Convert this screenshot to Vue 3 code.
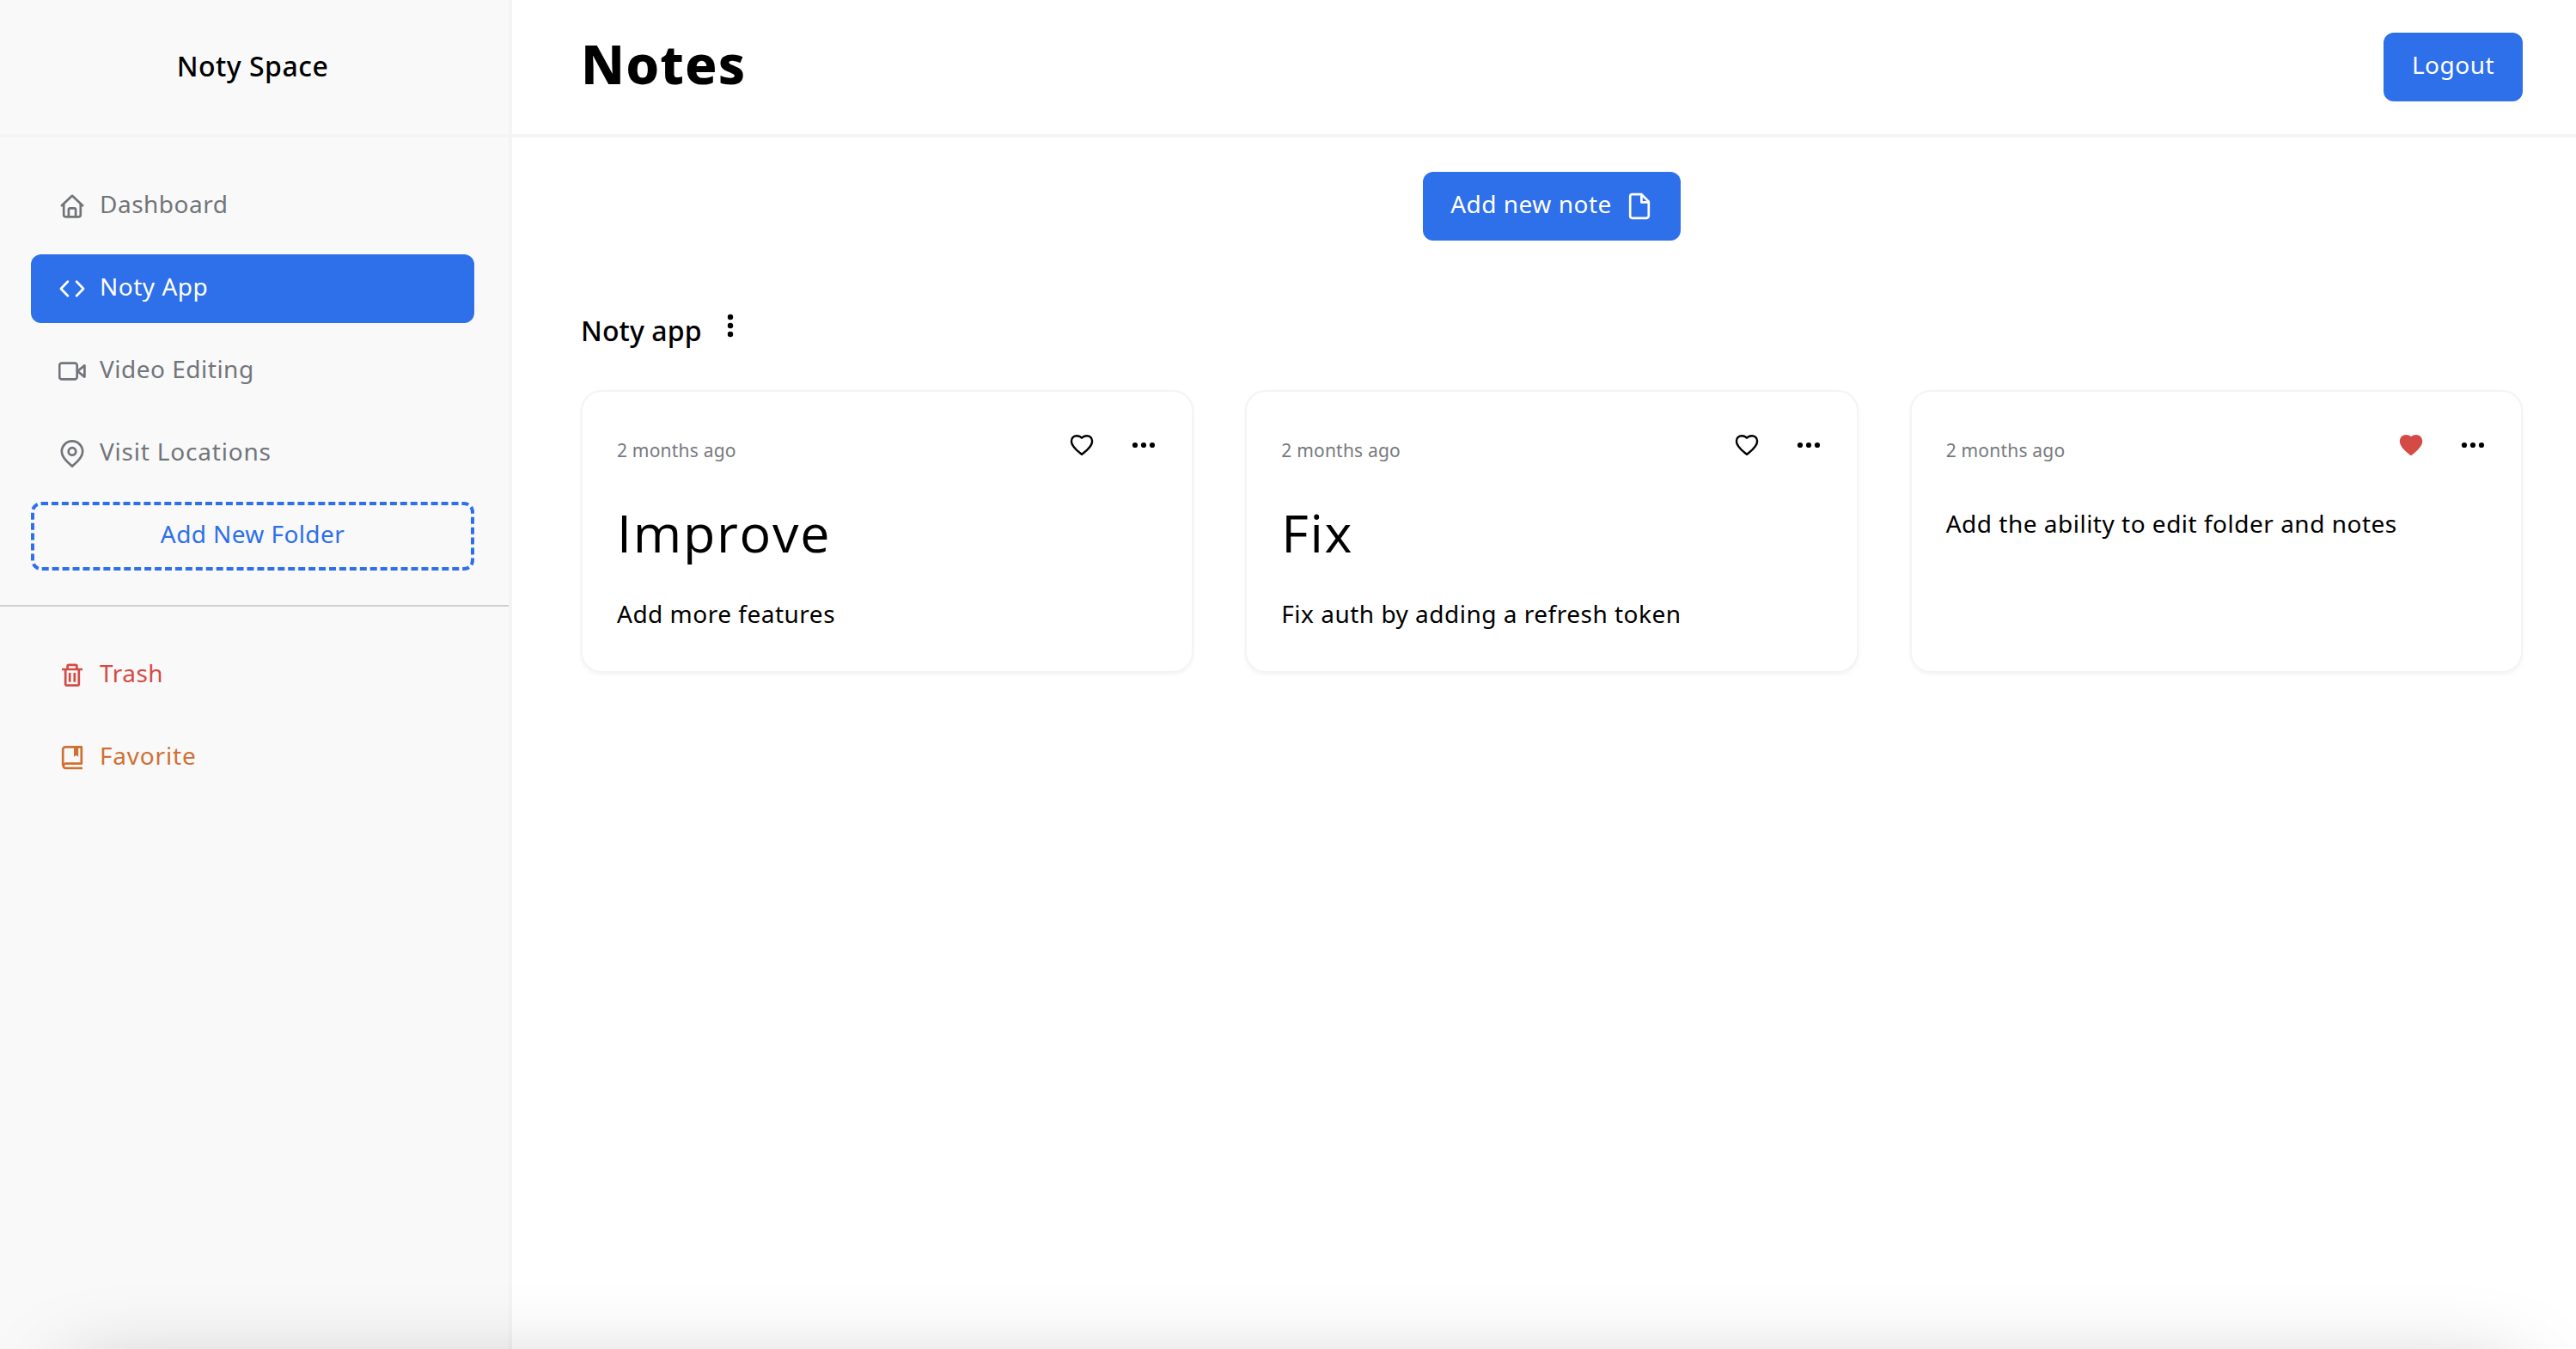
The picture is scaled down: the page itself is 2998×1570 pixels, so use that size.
<template>
  <div class="app">
    <aside class="sidebar">
      <div class="brand">Noty Space</div>
      <nav class="nav">
        <a
          v-for="item in folders"
          :key="item.label"
          class="nav-item"
          :class="{ active: item.active }"
        >
          <svg class="icon" viewBox="0 0 32 32">
            <path v-for="d in item.paths" :key="d" :d="d" />
          </svg>
          <span class="label" :style="{ letterSpacing: item.spacing + 'px' }">{{ item.label }}</span>
        </a>
        <button class="add-folder"><span class="label">Add New Folder</span></button>
      </nav>
      <nav class="nav extra">
        <a class="nav-item trash">
          <svg class="icon" viewBox="0 0 32 32">
            <path class="flat" d="M4 9h24M10.6 9V5.2c0-.8.5-1.3 1.3-1.3h8.2c.8 0 1.3.5 1.3 1.3V9M8.2 9v17.3c0 .8.6 1.4 1.4 1.4h12.800c.8 0 1.400-.6 1.400-1.400V9M13.200 13v10.700M18.800 13v10.700" />
          </svg>
          <span class="label">Trash</span>
        </a>
        <a class="nav-item favorite">
          <svg class="icon" viewBox="0 0 32 32">
            <path class="flat" d="M28 28H8a2.7 2.7 0 0 1 0-5.3h18.8V3.3H8.2a3 3 0 0 0-3 3v19" />
            <path class="solid" d="M18 3h5.2v11.7l-2.6-1.8-2.6 1.8z" />
          </svg>
          <span class="label">Favorite</span>
        </a>
      </nav>
    </aside>

    <div class="content">
      <header class="header">
        <h1>Notes</h1>
        <button class="btn logout"><span class="label">Logout</span></button>
      </header>

      <main class="main">
        <button class="btn add-note">
          <span class="label">Add new note</span>
          <svg class="icon" viewBox="0 0 32 32">
            <path d="M18.4 2.2H7.7a2.5 2.5 0 0 0-2.5 2.5v22.6a2.5 2.5 0 0 0 2.5 2.5h16.6a2.5 2.5 0 0 0 2.5-2.5V10.6zM18.4 2.2v9.2h8.4" />
          </svg>
        </button>

        <div class="section-head">
          <h2>Noty app</h2>
          <svg class="icon-more" viewBox="0 0 40 40">
            <circle cx="20" cy="10" r="3.2" />
            <circle cx="20" cy="20" r="3.2" />
            <circle cx="20" cy="30" r="3.2" />
          </svg>
        </div>

        <div class="notes">
          <article v-for="note in notes" :key="note.text" class="card">
            <div class="card-head">
              <span class="date">{{ note.date }}</span>
              <div class="actions">
                <svg class="icon heart" :class="{ liked: note.liked }" viewBox="0 0 32 32">
                  <path d="M16 26.8C12.6 24 3.9 18.4 3.9 11.5c0-3.7 2.8-6.3 6.2-6.3 2.6 0 4.5.9 5.9 2.5 1.4-1.6 3.3-2.5 5.9-2.5 3.4 0 6.2 2.6 6.2 6.3 0 6.9-8.7 12.5-12.1 15.3z" />
                </svg>
                <svg class="icon dots" viewBox="0 0 32 32">
                  <circle cx="6" cy="16" r="3.1" />
                  <circle cx="16" cy="16" r="3.1" />
                  <circle cx="26" cy="16" r="3.1" />
                </svg>
              </div>
            </div>
            <div class="card-body">
              <h3 v-if="note.title">{{ note.title }}</h3>
              <p>{{ note.text }}</p>
            </div>
          </article>
        </div>
      </main>
    </div>

    <div class="sheet"></div>
  </div>
</template>

<script setup>
const folders = [
  {
    label: 'Dashboard',
    spacing: 0.5,
    paths: [
      'M3.8 15.2 16 3.8l12.2 11.4',
      'M6.2 13.5v12.6c0 1.2 1 2.2 2.2 2.2h15.2c1.2 0 2.2-1 2.2-2.2V13.5',
      'M11.9 28v-8c0-.9.7-1.6 1.6-1.6h5c.9 0 1.6.7 1.6 1.6v8'
    ]
  },
  {
    label: 'Noty App',
    spacing: 0.5,
    active: true,
    paths: ['M10.9 7.8 2.9 16l8 8.2', 'M21.1 7.8l8 8.2-8 8.2']
  },
  {
    label: 'Video Editing',
    spacing: 0.5,
    paths: [
      'M3.8 6.7h15.3c1.4 0 2.6 1.2 2.6 2.6v13.4c0 1.4-1.2 2.6-2.6 2.6H3.8c-1.4 0-2.6-1.2-2.6-2.6V9.3c0-1.4 1.2-2.6 2.6-2.6z',
      'M22.2 16l8.2-6.6v13.2z'
    ]
  },
  {
    label: 'Visit Locations',
    spacing: 0.8,
    paths: [
      'M16 30.6C11.5 27 3.8 21 3.8 13.6a12.2 12.2 0 0 1 24.4 0C28.2 21 20.5 27 16 30.6z',
      'M11.7 13.4a4.3 4.3 0 1 0 8.6 0a4.3 4.3 0 1 0-8.6 0z'
    ]
  }
]

const notes = [
  { date: '2 months ago', title: 'Improve', text: 'Add more features' },
  { date: '2 months ago', title: 'Fix', text: 'Fix auth by adding a refresh token' },
  { date: '2 months ago', text: 'Add the ability to edit folder and notes', liked: true }
]
</script>

<style>
body {
  margin: 0;
  overflow: hidden;
}
</style>

<style scoped>
.app {
  position: relative;
  display: flex;
  height: 100vh;
  overflow: hidden;
  box-sizing: border-box;
  background: #fff;
  color: #000;
  font-family: 'Noto Sans', sans-serif;
  font-size: 28px;
  letter-spacing: 0.5px;
}

h1,
h2,
h3,
p {
  margin: 0;
}

button {
  font: inherit;
  letter-spacing: inherit;
  cursor: pointer;
}

.icon {
  flex: none;
  width: 32px;
  height: 32px;
  fill: none;
  stroke: currentColor;
  stroke-width: 2.7;
  stroke-linejoin: round;
  stroke-linecap: round;
}

.icon .flat {
  stroke-linecap: butt;
}

.icon .solid {
  fill: currentColor;
  stroke: none;
}

.label {
  padding-bottom: 6px;
  white-space: nowrap;
}

.sidebar {
  flex: none;
  width: 592px;
  border-right: 4px solid #f4f4f4;
  background: #f9f9f9;
}

.brand {
  display: flex;
  align-items: center;
  justify-content: center;
  height: 156px;
  padding: 0 4px 4px 0;
  box-sizing: border-box;
  font-size: 32px;
  font-weight: 500;
  letter-spacing: 0.5px;
}

.nav {
  display: flex;
  flex-direction: column;
  gap: 16px;
  padding: 40px 40px 40px 36px;
  border-top: 4px solid #f4f4f4;
}

.nav.extra {
  border-top: 2px solid #cfcfcf;
}

.nav-item {
  display: flex;
  align-items: center;
  gap: 16px;
  height: 80px;
  padding: 0 32px;
  border-radius: 12px;
  color: #71757a;
}

.nav-item.active {
  background: #2e6fea;
  color: #fff;
}

.nav-item.trash {
  color: #d44b45;
}

.nav-item.favorite {
  color: #cf7033;
  letter-spacing: 0.8px;
}

.add-folder {
  height: 80px;
  border: 4px dashed #2e6fea;
  border-radius: 12px;
  background: none;
  color: #2e6fea;
  letter-spacing: 0.4px;
}

.add-folder .label {
  display: block;
}

.content {
  flex: 1;
  min-width: 0;
}

.header {
  display: flex;
  align-items: center;
  justify-content: space-between;
  height: 156px;
  padding: 0 62px 0 80px;
  border-bottom: 4px solid #f4f4f4;
}

.header h1 {
  padding-bottom: 8px;
  font-size: 62px;
  font-weight: 800;
  letter-spacing: 1.1px;
}

.btn {
  display: flex;
  align-items: center;
  justify-content: center;
  gap: 16px;
  height: 80px;
  padding: 0;
  border: none;
  border-radius: 12px;
  background: #2e6fea;
  color: #fff;
}

.logout {
  width: 162px;
}

.add-note {
  width: 300px;
  margin: 0 auto;
}

.main {
  padding: 40px 62px 0 80px;
}

.section-head {
  display: flex;
  align-items: flex-start;
  height: 46px;
  margin: 79px 0 49px;
}

.section-head h2 {
  width: 154px;
  margin-top: 6px;
  font-size: 32px;
  font-weight: 500;
  line-height: 40px;
  letter-spacing: 0.1px;
  white-space: nowrap;
}

.icon-more {
  width: 40px;
  height: 40px;
}

.notes {
  display: grid;
  grid-template-columns: repeat(3, 1fr);
  gap: 60px;
}

.card {
  padding: 40px 40px 45px;
  border: 2px solid #f4f4f4;
  border-radius: 24px;
  box-shadow: 0 2px 4px rgba(0, 0, 0, 0.05);
}

.card-head {
  display: flex;
  align-items: center;
  justify-content: space-between;
  height: 44px;
}

.date {
  padding-top: 12px;
  color: #76797e;
  font-size: 21px;
  letter-spacing: 0.2px;
}

.actions {
  display: flex;
  gap: 40px;
}

.heart {
  stroke-width: 2.4;
}

.heart.liked {
  color: #d44b45;
  fill: currentColor;
}

.dots {
  fill: currentColor;
  stroke: none;
}

.card-body {
  padding-top: 47px;
}

.card-body h3 {
  margin: -3px 0 36px;
  font-family: 'Open Sans', sans-serif;
  font-size: 61px;
  font-weight: 500;
  line-height: 72px;
  letter-spacing: 1.7px;
}

.card-body p {
  line-height: 44px;
  letter-spacing: 0.5px;
}

/* sheet parked under the viewport, only its shadow shows */
.sheet {
  position: absolute;
  top: 100%;
  left: 80px;
  right: 70px;
  height: 300px;
  margin-top: 30px;
  box-shadow: 0 0 100px rgba(0, 0, 0, 0.25);
}
</style>
